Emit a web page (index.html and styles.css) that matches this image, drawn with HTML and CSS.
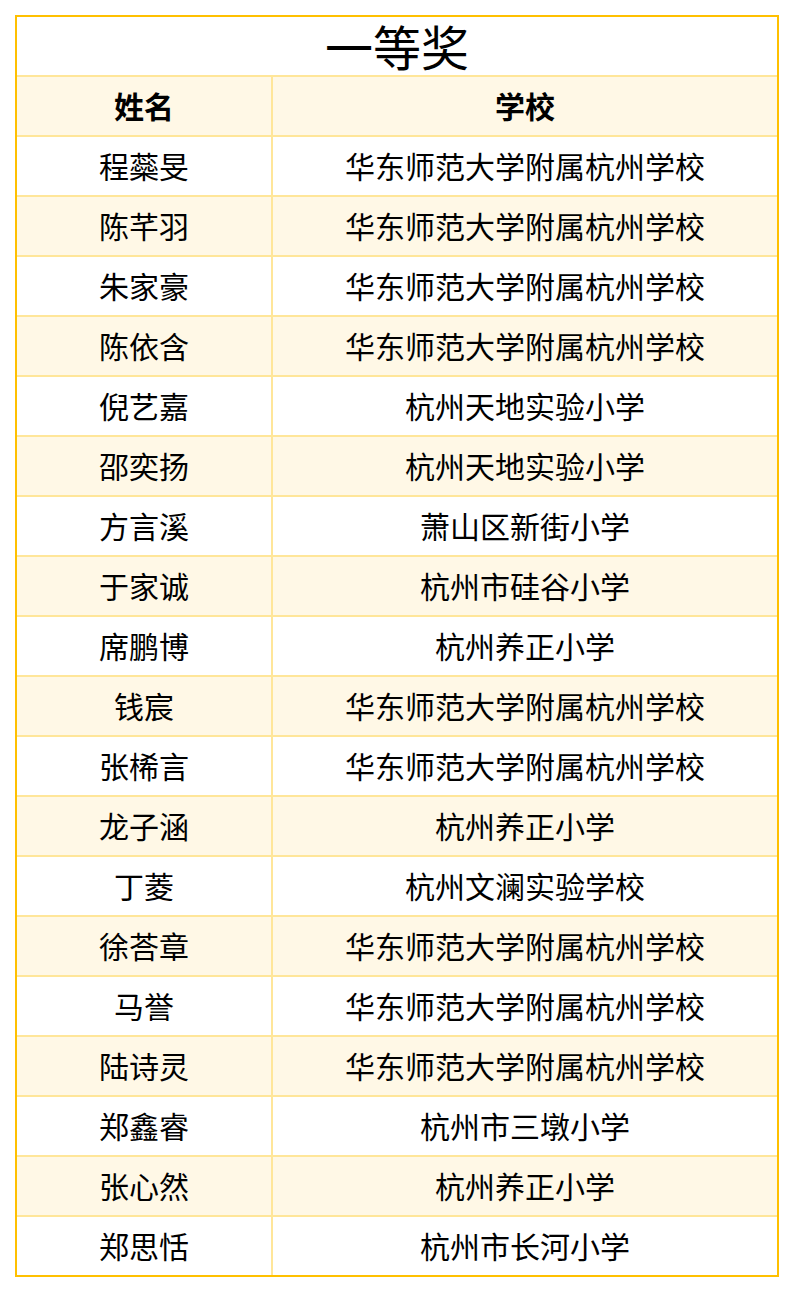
FILE: index.html
```html
<!DOCTYPE html>
<html lang="zh-CN">
<head>
<meta charset="utf-8">
<title>一等奖</title>
<link rel="stylesheet" href="styles.css">
</head>
<body>
<div class="sheet">
  <div class="title">一等奖</div>
  <div class="cell head">姓名</div>
  <div class="cell head">学校</div>

  <div class="cell">程蘂旻</div><div class="cell">华东师范大学附属杭州学校</div>
  <div class="cell fill">陈芊羽</div><div class="cell fill">华东师范大学附属杭州学校</div>
  <div class="cell">朱家豪</div><div class="cell">华东师范大学附属杭州学校</div>
  <div class="cell fill">陈依含</div><div class="cell fill">华东师范大学附属杭州学校</div>
  <div class="cell">倪艺嘉</div><div class="cell">杭州天地实验小学</div>
  <div class="cell fill">邵奕扬</div><div class="cell fill">杭州天地实验小学</div>
  <div class="cell">方言溪</div><div class="cell">萧山区新街小学</div>
  <div class="cell fill">于家诚</div><div class="cell fill">杭州市硅谷小学</div>
  <div class="cell">席鹏博</div><div class="cell">杭州养正小学</div>
  <div class="cell fill">钱宸</div><div class="cell fill">华东师范大学附属杭州学校</div>
  <div class="cell">张桸言</div><div class="cell">华东师范大学附属杭州学校</div>
  <div class="cell fill">龙子涵</div><div class="cell fill">杭州养正小学</div>
  <div class="cell">丁菱</div><div class="cell">杭州文澜实验学校</div>
  <div class="cell fill">徐荅章</div><div class="cell fill">华东师范大学附属杭州学校</div>
  <div class="cell">马誉</div><div class="cell">华东师范大学附属杭州学校</div>
  <div class="cell fill">陆诗灵</div><div class="cell fill">华东师范大学附属杭州学校</div>
  <div class="cell">郑鑫睿</div><div class="cell">杭州市三墩小学</div>
  <div class="cell fill">张心然</div><div class="cell fill">杭州养正小学</div>
  <div class="cell">郑思恬</div><div class="cell">杭州市长河小学</div>
</div>
</body>
</html>
```
FILE: styles.css
```css
html, body {
  margin: 0;
  padding: 0;
  background: #ffffff;
}

body {
  font-family: "Noto Sans CJK SC", "Noto Sans", sans-serif;
  color: #000000;
}

.sheet {
  box-sizing: border-box;
  width: 764px;
  margin: 15px 0 0 15px;
  border: 2px solid #ffc000;
  background: #ffe699;
  display: grid;
  grid-template-columns: 254px 1fr;
  grid-auto-rows: 58px;
  gap: 2px;
}

.title {
  grid-column: 1 / span 2;
  background: #ffffff;
  font-size: 48px;
  line-height: 56px;
  text-align: center;
}

.cell {
  background: #ffffff;
  font-size: 30px;
  line-height: 56px;
  text-align: center;
  white-space: nowrap;
}

.cell.fill,
.cell.head {
  background: #fff8e6;
}

.cell.head {
  font-weight: bold;
}
```
